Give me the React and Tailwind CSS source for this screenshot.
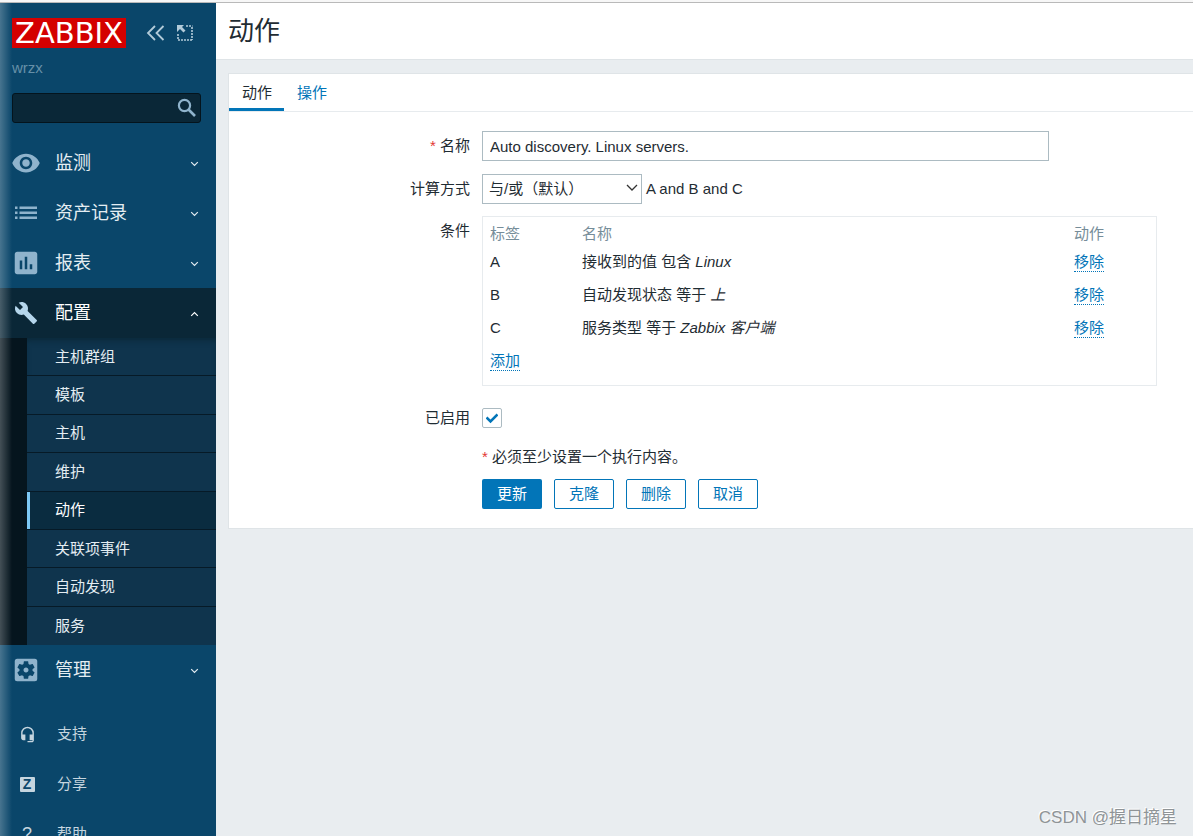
import { useState } from 'react'
import { MdVisibility, MdAssessment, MdSettingsApplications, MdHeadsetMic } from 'react-icons/md'

const subItems = ['主机群组', '模板', '主机', '维护', '动作', '关联项事件', '自动发现', '服务']

const conditions = [
  { label: 'A', text: '接收到的值 包含', value: 'Linux' },
  { label: 'B', text: '自动发现状态 等于', value: '上' },
  { label: 'C', text: '服务类型 等于', value: 'Zabbix 客户端' },
]

function ListIcon() {
  return (
    <svg width="24" height="14" viewBox="0 0 24 14" fill="currentColor">
      <path d="M1 0.500h2.500v2.500H1zM5.500 0.500H23v2.500H5.500zM1 5.500h2.500v2.500H1zM5.500 5.500H23v2.500H5.500zM1 10.500h2.500V13H1zM5.500 10.500H23V13H5.500z" />
    </svg>
  )
}

function WrenchIcon() {
  return (
    <svg width="24" height="24" viewBox="0 0 24 24" fill="currentColor">
      <path d="M22.7 19l-9.1-9.1c.9-2.3.4-5-1.5-6.9-2-2-5-2.4-7.4-1.300L9 6 6 9 1.600 4.700C.4 7.100.9 10.100 2.900 12.100c1.900 1.900 4.600 2.400 6.900 1.500l9.100 9.100c.4.4 1 .4 1.400 0l2.300-2.300c.5-.4.5-1.100.1-1.400z" />
    </svg>
  )
}

function SearchIcon() {
  return (
    <svg width="20" height="20" viewBox="0 0 20 20" fill="none" stroke="currentColor">
      <circle cx="7.500" cy="7.500" r="5.600" strokeWidth="2.2" />
      <path d="M11.500 11.500l6.500 6.500" strokeWidth="2.6" />
    </svg>
  )
}

function Chevron({ up }) {
  return (
    <svg width="9" height="6" viewBox="0 0 9 6" fill="none" stroke="currentColor" strokeWidth="1.2">
      <path d={up ? 'M1.200 4.800l3.300-3.300 3.300 3.300' : 'M1.200 1.200l3.300 3.300 3.300-3.300'} />
    </svg>
  )
}

function MenuItem({ icon, label, open }) {
  return (
    <a
      href="#"
      className={
        open
          ? 'flex h-[50px] items-center gap-3.5 bg-[#0a2737] pl-[11px] pr-[17px] text-lg text-white'
          : 'flex h-[50px] items-center gap-3.5 pl-[11px] pr-[17px] text-lg text-[#e4edf2]'
      }
    >
      <span className={open ? 'flex w-[30px] justify-center text-[#b5d6ec]' : 'flex w-[30px] justify-center text-[#8fb3cc]'}>
        {icon}
      </span>
      <span className="grow leading-6">{label}</span>
      <span className="pt-0.5"><Chevron up={open} /></span>
    </a>
  )
}

function FooterItem({ icon, label }) {
  return (
    <a href="#" className="flex h-[50px] items-center gap-[15px] pl-3 text-[15px] text-[#c5d5df]">
      <span className="flex w-[30px] justify-center">{icon}</span>
      <span className="leading-5">{label}</span>
    </a>
  )
}

function Sidebar() {
  return (
    <aside className="relative w-[216px] shrink-0 overflow-hidden bg-[#0a466a]">
      <div className="flex items-center pl-3 pt-[15px]">
        <a href="#" className="flex h-[30px] w-[114px] items-center justify-center bg-[#d40000] font-['DejaVu_Sans'] text-[29px] leading-[30px] text-white">
          ZABBIX
        </a>
        <button type="button" aria-label="收起" className="ml-5 text-[#b3cbd9]">
          <svg width="19" height="16" viewBox="0 0 19 16" fill="none" stroke="currentColor" strokeWidth="1.8">
            <path d="M9 1L2 8l7 7M17.500 1l-7 7 7 7" />
          </svg>
        </button>
        <button type="button" aria-label="隐藏" className="ml-3 text-[#b3cbd9]">
          <svg width="16" height="16" viewBox="0 0 16 16" fill="none" stroke="currentColor">
            <path d="M9 1h6.500M15 2v13M1 9v6M1 15h14" strokeWidth="1.6" strokeDasharray="2 1" />
            <path d="M0 0h7L5 2l3.500 3.500-2 2L3 4 0 7z" fill="currentColor" stroke="none" />
          </svg>
        </button>
      </div>
      <div className="mt-2.5 pl-3 text-[15px] leading-5 text-[#6690a8]">wrzx</div>
      <form className="relative mb-[15px] ml-3 mr-[15px] mt-[15px]" role="search">
        <input
          type="search"
          aria-label="搜索"
          className="block h-[30px] w-full rounded-[3px] border border-[#04141d] bg-[#0a2737] px-2 text-white outline-none"
        />
        <button type="submit" aria-label="搜索" className="absolute right-1 top-[5px] text-[#8fb3cc]">
          <SearchIcon />
        </button>
      </form>

      <nav>
        <MenuItem icon={<MdVisibility size={30} />} label="监测" />
        <MenuItem icon={<ListIcon />} label="资产记录" />
        <MenuItem icon={<MdAssessment size={30} />} label="报表" />
        <MenuItem icon={<WrenchIcon />} label="配置" open />
        <ul className="grid h-[307px] auto-rows-fr bg-[#05151e] pl-[27px]">
          {subItems.map(item => (
            <li
              key={item}
              className="border-b border-[#061a27] bg-[#0f344d] first:shadow-[inset_0_5px_6px_-3px_#0a2737] last:border-b-0"
            >
              <a
                href="#"
                className={
                  item === '动作'
                    ? 'flex h-full items-center border-l-[3px] border-[#7cc8f5] bg-[#0a2c40] pl-[25px] text-[15px] leading-5 text-white'
                    : 'flex h-full items-center pl-7 text-[15px] leading-5 text-[#e4edf2]'
                }
              >
                {item}
              </a>
            </li>
          ))}
        </ul>
        <MenuItem icon={<MdSettingsApplications size={30} />} label="管理" />
      </nav>

      <div className="mt-3.5">
        <FooterItem icon={<MdHeadsetMic size={17} />} label="支持" />
        <FooterItem
          icon={
            <span className="flex size-[15px] items-center justify-center rounded-[1px] bg-[#c5d5df] text-sm leading-[15px] font-bold text-[#0a466a]">
              Z
            </span>
          }
          label="分享"
        />
        <FooterItem icon={<span className="text-lg leading-5">?</span>} label="帮助" />
      </div>

      <div className="pointer-events-none absolute inset-y-0 left-0 w-3 bg-linear-to-r from-white/25 to-transparent" />
    </aside>
  )
}

function Row({ label, htmlFor, required, children }) {
  return (
    <div className="flex gap-3">
      <div className="w-1/4 shrink-0 text-right leading-[30px]">
        {required && <span className="text-[#e33734]">* </span>}
        <label htmlFor={htmlFor}>{label}</label>
      </div>
      <div className="min-w-0 grow">{children}</div>
    </div>
  )
}

function LinkButton({ children }) {
  return (
    <button type="button" className="border-b border-dotted border-[#0275b8] leading-[19px] text-[#0275b8]">
      {children}
    </button>
  )
}

function ActionForm() {
  const [name, setName] = useState('Auto discovery. Linux servers.')
  const [enabled, setEnabled] = useState(true)

  const secondary = 'h-[30px] w-[60px] rounded-[2px] border border-[#0275b8] bg-white text-[#0275b8]'

  return (
    <form className="pb-[19px] pt-[19px]">
      <Row label="名称" htmlFor="name" required>
        <input
          id="name"
          type="text"
          value={name}
          onChange={e => setName(e.target.value)}
          className="block h-[30px] w-full max-w-[567px] border border-[#acbbc2] bg-white px-[7px] outline-none"
        />
      </Row>

      <div className="mt-[13px]">
        <Row label="计算方式" htmlFor="evaltype">
          <div className="flex items-center gap-1">
            <span className="relative">
              <select
                id="evaltype"
                className="block h-[30px] w-40 appearance-none border border-[#acbbc2] bg-white px-1.5 outline-none"
              >
                <option>与/或（默认）</option>
              </select>
              <svg
                className="pointer-events-none absolute right-1 top-2.5"
                width="12" height="8" viewBox="0 0 12 8" fill="none" stroke="#333" strokeWidth="1.3"
              >
                <path d="M1 1l5 5 5-5" />
              </svg>
            </span>
            <span>A and B and C</span>
          </div>
        </Row>
      </div>

      <div className="mt-3">
        <Row label="条件">
          <div className="max-w-[675px] border border-[#e7ebee] px-[7px] pb-2 pt-[5px]">
            <table className="w-full table-fixed text-left">
              <thead>
                <tr className="h-[23px] text-[#768d99]">
                  <th className="w-[92px] font-normal">标签</th>
                  <th className="font-normal">名称</th>
                  <th className="w-[75px] font-normal">动作</th>
                </tr>
              </thead>
              <tbody>
                {conditions.map(c => (
                  <tr key={c.label} className="h-[33px]">
                    <td>{c.label}</td>
                    <td>{c.text} <em>{c.value}</em></td>
                    <td><LinkButton>移除</LinkButton></td>
                  </tr>
                ))}
                <tr className="h-[33px]">
                  <td colSpan={3}><LinkButton>添加</LinkButton></td>
                </tr>
              </tbody>
            </table>
          </div>
        </Row>
      </div>

      <div className="mt-[17px]">
        <Row label="已启用" htmlFor="status">
          <div className="flex h-[30px] items-center">
            <span className="relative">
              <input
                id="status"
                type="checkbox"
                checked={enabled}
                onChange={e => setEnabled(e.target.checked)}
                className="block size-5 appearance-none rounded-[2px] border border-[#acbbc2] bg-white"
              />
              {enabled && (
                <svg
                  className="pointer-events-none absolute left-1 top-1"
                  width="12" height="12" viewBox="0 0 12 12" fill="none" stroke="#0275b8" strokeWidth="2.600"
                >
                  <path d="M0.500 5.500l4 4L11.500 2.500" />
                </svg>
              )}
            </span>
          </div>
        </Row>
      </div>

      <div className="mt-3.5 pl-[calc(25%+12px)]">
        <p><span className="text-[#e33734]">*</span> 必须至少设置一个执行内容。</p>
        <div className="mt-3 flex gap-3">
          <button type="submit" className="h-[30px] w-[60px] rounded-[2px] bg-[#0275b8] text-white">更新</button>
          <button type="button" className={secondary}>克隆</button>
          <button type="button" className={secondary}>删除</button>
          <button type="button" className={secondary}>取消</button>
        </div>
      </div>
    </form>
  )
}

export default function App() {
  return (
    <div className="relative flex h-screen flex-col overflow-hidden bg-[#e9edf0] font-['Liberation_Sans','Noto_Sans_CJK_SC',sans-serif] text-[15px] leading-5 text-[#1f2c33]">
      <div className="h-[3px] shrink-0 border-b border-[#b9b9b9] bg-[#f7f7f7]" />
      <div className="flex min-h-0 grow">
        <Sidebar />
        <main className="min-w-0 grow">
          <header className="flex h-[57px] items-center border-b border-[#dfe4e7] bg-white pl-3">
            <h1 className="text-[26px] leading-8">动作</h1>
          </header>
          <section className="ml-3 mt-[13px] border-y border-l border-[#dfe4e7] bg-white">
            <nav className="flex h-[38px] border-b border-[#e7ebee]">
              <a href="#" className="border-b-[3px] border-[#0275b8] pl-[13px] pr-3 pt-[9px]">动作</a>
              <a href="#" className="pl-[13px] pr-3 pt-[9px] text-[#0275b8]">操作</a>
            </nav>
            <ActionForm />
          </section>
        </main>
      </div>
      <div className="pointer-events-none absolute bottom-1.5 right-4 text-[17px] leading-6 text-[#8f9497] [text-shadow:-1px_-1px_0_#fff]">
        CSDN @握日摘星
      </div>
    </div>
  )
}
